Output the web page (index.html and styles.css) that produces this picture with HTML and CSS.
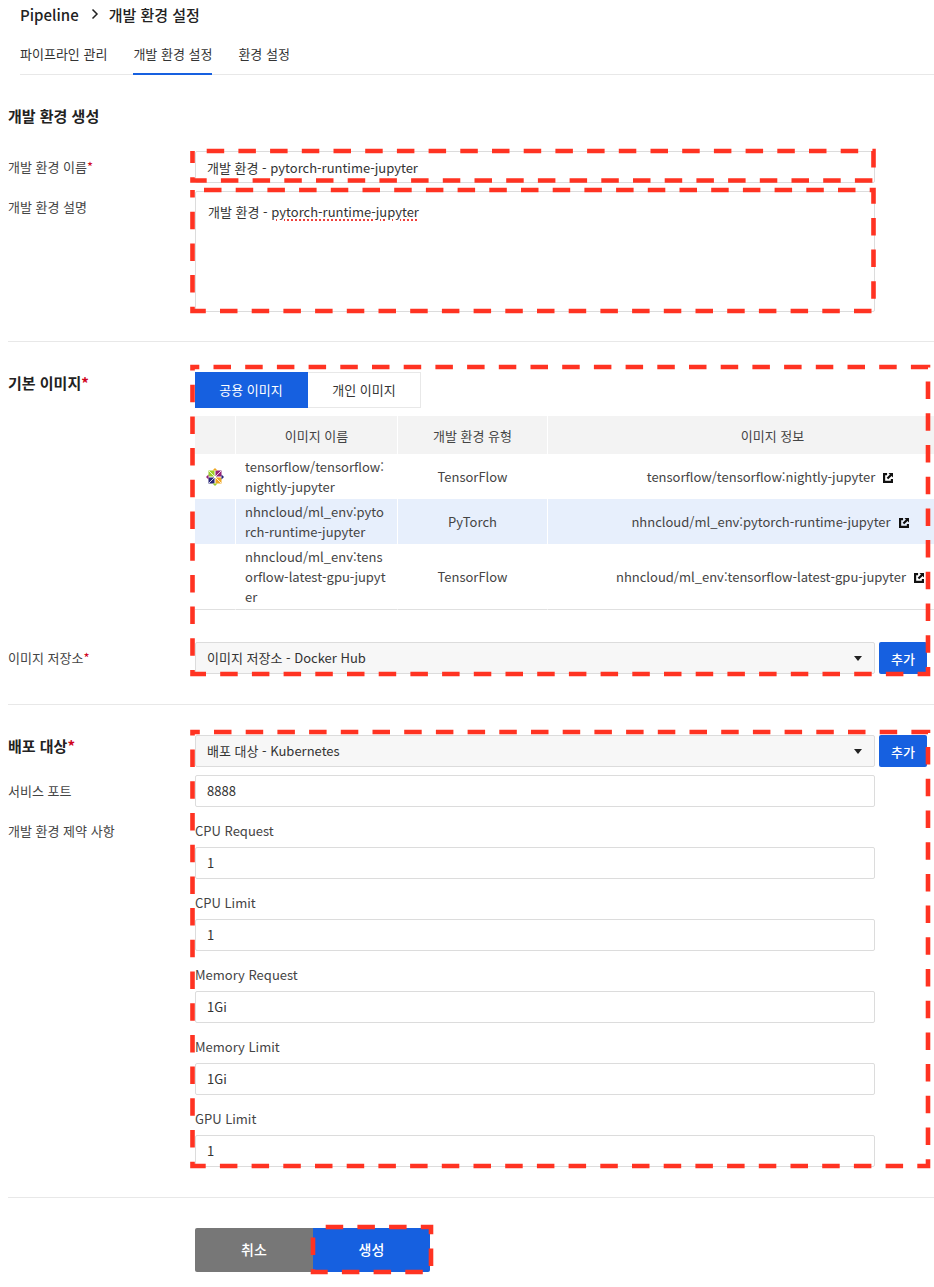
FILE: index.html
```html
<!DOCTYPE html>
<html lang="ko">
<head>
<meta charset="utf-8">
<title>개발 환경 설정</title>
<link rel="stylesheet" href="styles.css">
</head>
<body>
<svg width="0" height="0" class="defs">
  <symbol id="ext" viewBox="0 0 11 11">
    <path d="M4.5 1.200H1.200v8.600h8.600V6.500" fill="none" stroke="#111" stroke-width="2.400"/>
    <path d="M6 0h5v5L9.400 3.400 5.800 7 4 5.200 7.600 1.600z" fill="#111"/>
  </symbol>
</svg>
<div class="page">
  <header class="head">
    <div class="crumb"><span>Pipeline</span><svg class="chev" width="8" height="12" viewBox="0 0 8 12"><path d="M1.5 1.5 6 6l-4.500 4.500" fill="none" stroke="#222" stroke-width="1.500"/></svg><span>개발 환경 설정</span></div>
    <nav class="tabs">
      <a class="tab">파이프라인 관리</a>
      <a class="tab active">개발 환경 설정</a>
      <a class="tab">환경 설정</a>
    </nav>
  </header>

  <section class="sec sec-one">
    <h2 class="sec-title">개발 환경 생성</h2>
    <div class="row row-name">
      <label class="lbl">개발 환경 이름<i class="req">*</i></label>
      <div class="field narrow">개발 환경 - pytorch-runtime-jupyter</div>
    </div>
    <div class="row row-desc">
      <label class="lbl">개발 환경 설명</label>
      <div class="field area narrow">개발 환경 - <span class="spell">pytorch-runtime-jupyter</span></div>
    </div>
  </section>

  <section class="sec sec-two">
    <div class="row">
      <label class="lbl big">기본 이미지<i class="req">*</i></label>
      <div class="body">
        <div class="imgtabs"><span class="imgtab on">공용 이미지</span><span class="imgtab">개인 이미지</span></div>
        <table class="tbl">
          <colgroup><col class="c1"><col class="c2"><col class="c3"><col class="c4"></colgroup>
          <thead><tr><th></th><th>이미지 이름</th><th>개발 환경 유형</th><th>이미지 정보</th></tr></thead>
          <tbody>
            <tr>
              <td class="ico"><svg width="20" height="20" viewBox="0 0 20 20"><rect x="3.500" y="3.500" width="6" height="6" fill="#9ccd2a"/><rect x="10.500" y="3.500" width="6" height="6" fill="#932279"/><rect x="10.500" y="10.500" width="6" height="6" fill="#efa724"/><rect x="3.500" y="10.500" width="6" height="6" fill="#262577"/><path d="M10 1 7.500 3.500h5z" fill="#efa724"/><path d="M10 19l-2.500-2.500h5z" fill="#9ccd2a"/><path d="M1 10l2.500-2.500v5z" fill="#932279"/><path d="M19 10l-2.500-2.500v5z" fill="#262577"/><path d="M10 10 4 4M10 10l6-6M10 10l6 6M10 10l-6 6" stroke="#fff" stroke-width=".8"/><path d="M9 9h2v2H9z" fill="#fff"/></svg></td>
              <td class="name">tensorflow/tensorflow:<br>nightly-jupyter</td>
              <td>TensorFlow</td>
              <td class="info">tensorflow/tensorflow:nightly-jupyter<svg class="ext"><use href="#ext"/></svg></td>
            </tr>
            <tr class="sel">
              <td></td>
              <td class="name">nhncloud/ml_env:pyto<br>rch-runtime-jupyter</td>
              <td>PyTorch</td>
              <td class="info">nhncloud/ml_env:pytorch-runtime-jupyter<svg class="ext"><use href="#ext"/></svg></td>
            </tr>
            <tr class="last">
              <td></td>
              <td class="name">nhncloud/ml_env:tens<br>orflow-latest-gpu-jupyt<br>er</td>
              <td>TensorFlow</td>
              <td class="info">nhncloud/ml_env:tensorflow-latest-gpu-jupyter<svg class="ext"><use href="#ext"/></svg></td>
            </tr>
          </tbody>
        </table>
      </div>
    </div>
    <div class="row row-repo">
      <label class="lbl">이미지 저장소<i class="req">*</i></label>
      <div class="pick"><div class="select">이미지 저장소 - Docker Hub<b class="caret"></b></div><button class="add">추가</button></div>
    </div>
  </section>

  <section class="sec sec-three">
    <div class="row">
      <label class="lbl big">배포 대상<i class="req">*</i></label>
      <div class="pick"><div class="select">배포 대상 - Kubernetes<b class="caret"></b></div><button class="add">추가</button></div>
    </div>
    <div class="row row-port">
      <label class="lbl">서비스 포트</label>
      <div class="field narrow">8888</div>
    </div>
    <div class="row row-limits">
      <label class="lbl">개발 환경 제약 사항</label>
      <div class="limits">
        <div class="limit"><div class="sub">CPU Request</div><div class="field narrow">1</div></div>
        <div class="limit"><div class="sub">CPU Limit</div><div class="field narrow">1</div></div>
        <div class="limit"><div class="sub">Memory Request</div><div class="field narrow">1Gi</div></div>
        <div class="limit"><div class="sub">Memory Limit</div><div class="field narrow">1Gi</div></div>
        <div class="limit"><div class="sub">GPU Limit</div><div class="field narrow">1</div></div>
      </div>
    </div>
  </section>

  <footer class="foot">
    <button class="btn gray">취소</button><button class="btn blue">생성</button>
  </footer>

  <svg class="marks" width="934" height="1287" viewBox="0 0 934 1287">
    <rect class="m1" x="192.500" y="151" width="681" height="29.500"/>
    <rect class="m2" x="192.500" y="190" width="681" height="121"/>
    <rect class="m3" x="192.500" y="367" width="735.500" height="307"/>
    <rect class="m4" x="192.500" y="732" width="735.500" height="434"/>
    <rect class="m5" x="313" y="1227" width="118" height="45"/>
  </svg>
</div>
</body>
</html>
```

FILE: styles.css
```css
* { box-sizing: border-box; }
html, body { margin: 0; padding: 0; background: #fff; }
body {
  font-family: "Noto Sans CJK KR", "Noto Sans", sans-serif;
  font-size: 13px;
  color: #333;
}
.defs { position: absolute; }
.page { position: relative; width: 934px; height: 1287px; overflow: hidden; }

.head { padding-left: 20px; }
.crumb { display: flex; align-items: center; height: 28px; font-size: 15px; font-weight: 500; color: #222; }
.chev { margin: 0 10px 0 12px; }
.tabs { display: flex; height: 47px; gap: 26px; border-bottom: 1px solid #e8e8e8; }
.tab { height: 47px; padding-top: 16px; line-height: 20px; white-space: nowrap; }
.tab.active { border-bottom: 2px solid #1660e0; width: 79px; }

.sec { margin-left: 8px; border-bottom: 1px solid #e8e8e8; width: 960px; }
.sec-one { height: 267px; }
.sec-two { height: 363px; padding-top: 30px; }
.sec-three { height: 493px; padding-top: 30px; }
.sec-title { margin: 0; padding-top: 31px; height: 76px; font-size: 15px; font-weight: 700; line-height: 20px; color: #222; }

.row { display: grid; grid-template-columns: 187px 1fr; }
.lbl { font-size: 13px; line-height: 18px; padding-top: 7px; color: #444; }
.lbl.big { font-size: 15px; font-weight: 700; color: #222; line-height: 20px; padding-top: 1px; }
.req { color: #d0021b; font-style: normal; }
.row-desc { margin-top: 8px; }
.row-repo { margin-top: 32px; }
.row-port { margin-top: 8px; }
.row-limits { margin-top: 8px; }

.field {
  height: 32px;
  border: 1px solid #dcdcdc;
  border-radius: 2px;
  padding: 0 11px;
  line-height: 30px;
  color: #333;
  background: #fff;
}
.row-name .field { padding-top: 1px; }
.narrow { width: 680px; }
.area { height: 121px; padding: 10px 12px; line-height: 20px; }
.spell { text-decoration: underline dotted #f0403a; text-decoration-thickness: 1.500px; text-underline-offset: 2px; }

.imgtabs { display: flex; height: 36px; }
.imgtab { width: 113px; border: 1px solid #e8e8e8; border-left: 0; text-align: center; line-height: 34px; color: #333; }
.imgtab.on { background: #1660e0; border-color: #1660e0; color: #fff; }

.tbl { margin-top: 8px; width: 802px; table-layout: fixed; border-collapse: separate; border-spacing: 0; color: #444; }
.c1 { width: 40px; } .c2 { width: 162px; } .c3 { width: 150px; } .c4 { width: 450px; }
.tbl th { height: 38px; background: #f3f3f3; font-weight: 400; border-left: 1px solid #fff; padding: 0; }
.tbl th:first-child { border-left: 0; }
.tbl td { height: 45px; padding: 0; text-align: center; line-height: 20px; border-left: 1px solid #fff; }
.tbl td:first-child { border-left: 0; }
.tbl td.name { text-align: left; padding-left: 9px; word-break: break-all; }
.tbl td.info { padding-right: 5px; }
.tbl td.ico { line-height: 0; text-align: left; padding-left: 10px; }
.tbl tr.sel td { background: #e7effc; }
.tbl tr.last td { height: 66px; border-bottom: 1px solid #e0e0e0; }
.ext { width: 10px; height: 10px; margin-left: 8px; vertical-align: -1px; }

.pick { display: flex; gap: 4px; }
.select {
  position: relative;
  width: 680px;
  height: 32px;
  background: #f7f7f7;
  border: 1px solid #dcdcdc;
  border-radius: 2px;
  padding: 0 11px;
  line-height: 30px;
  color: #333;
}
.caret {
  position: absolute;
  right: 12px;
  top: 13px;
  border: 4px solid transparent;
  border-top: 5px solid #222;
  border-bottom: 0;
}
.add {
  width: 48px;
  height: 32px;
  padding: 0;
  border: 0;
  border-radius: 2px;
  background: #1660e0;
  color: #fff;
  font: 500 13px "Noto Sans CJK KR", sans-serif;
}

.limits { display: flex; flex-direction: column; gap: 8px; }
.sub { height: 32px; line-height: 32px; color: #444; }

.foot { display: flex; padding: 30px 0 0 195px; }
.btn {
  height: 44px;
  padding: 0 0 2px;
  border: 0;
  color: #fff;
  font: 500 14px "Noto Sans CJK KR", sans-serif;
}
.btn.gray { width: 118px; background: #777; border-radius: 2px 0 0 2px; }
.btn.blue { width: 117px; background: #1660e0; border-radius: 0 2px 2px 0; }

.marks { position: absolute; left: 0; top: 0; pointer-events: none; }
.marks rect { fill: none; stroke: #ff3322; stroke-width: 4.600; stroke-dasharray: 17.500 14.200; }
.marks .m1 { stroke-dashoffset: 17.500; }
.marks .m2 { stroke-dashoffset: 20.200; }
.marks .m3 { stroke-dashoffset: 10.700; }
.marks .m4 { stroke-dashoffset: 10.200; }
.marks .m5 { stroke-dashoffset: 19px; }
```
